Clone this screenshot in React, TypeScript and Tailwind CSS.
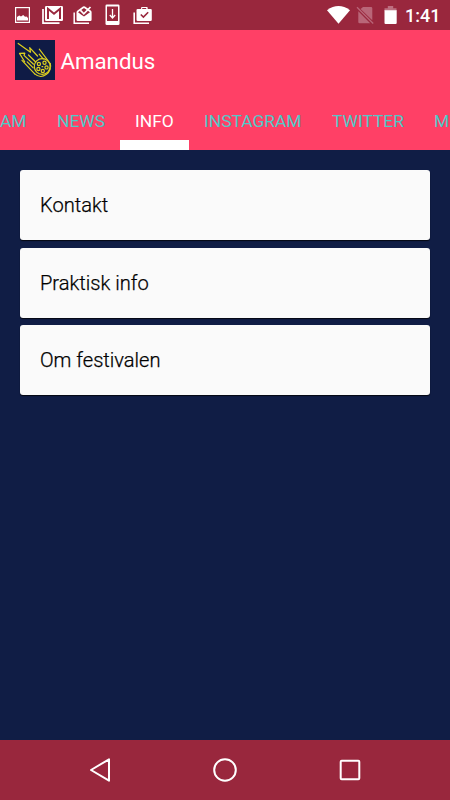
type Tab = {
  label: string;
  className: string;
};

const tabs: Tab[] = [
  { label: "AM", className: "w-[42px] pl-0" },
  { label: "NEWS", className: "w-[78px] pl-[15px]" },
  { label: "INFO", className: "w-[69px] pl-[15px]" },
  { label: "INSTAGRAM", className: "w-[128px] pl-[15px]" },
  { label: "TWITTER", className: "w-[102px] pl-[15px]" },
  { label: "M", className: "w-[42px] pl-[15px]" },
];

const cards = ["Kontakt", "Praktisk info", "Om festivalen"];

function NotificationIcons() {
  return (
    <svg width="160" height="30" viewBox="0 0 160 30" className="shrink-0" aria-hidden="true">
      {/* picture */}
      <rect x="15.6" y="7.6" width="13.8" height="14.8" fill="none" stroke="#fff" strokeWidth="1.2" />
      <path d="M17 20.5v-3.4l2.2-1.5 1.8.9 2.2-1.5 1.8 1.8 1.5-.4 1.5 1.5v2.6z" fill="#fff" />
      {/* mail stack */}
      <path d="M43 9v14.2h16.5" fill="none" stroke="#fff" strokeWidth="1.7" />
      <rect x="45" y="6" width="18" height="15" rx="1.2" fill="#fff" />
      <path d="M48 19V8.8l6 5 6-5V19" fill="none" stroke="#99273d" strokeWidth="2" />
      {/* inbox stack */}
      <path d="M74.2 12.5v10.7H89" fill="none" stroke="#fff" strokeWidth="1.5" />
      <path
        d="M76.5 12.2c0-.8.4-1.2 1-1.6l5.5-4q1-.6 2 0l5.7 4c.6.4.9.8.9 1.6v7.6q0 1.2-1.2 1.2H77.7q-1.2 0-1.2-1.2z"
        fill="#fff"
      />
      <path d="M78 12.3l3 2.2 3 2 6-4.2-6-4.4z" fill="#99273d" />
      <path d="M80.3 10.2l3.5 3.6 6.7-6.8" fill="none" stroke="#fff" strokeWidth="1.7" />
      {/* system update */}
      <rect x="105.5" y="4.5" width="14" height="20.5" rx="1.3" fill="#fff" />
      <rect x="107" y="6.5" width="11" height="14.5" fill="#99273d" />
      <path d="M112.5 9v8.5M109.8 15l2.7 3 2.7-3" fill="none" stroke="#fff" strokeWidth="1.3" />
      {/* checked bags */}
      <path d="M134.2 12.5v10.7H149" fill="none" stroke="#fff" strokeWidth="1.6" />
      <path
        d="M137.7 9h3.4V7.8q0-.9.9-.9h4.8q.9 0 .9.9V9h3q1.1 0 1.1 1.1v9.6q0 1.2-1.2 1.2h-12.9q-1.2 0-1.2-1.2v-9.6q0-1.1 1.2-1.1z"
        fill="#fff"
      />
      <path d="M142.2 8h4v1h-4z" fill="#99273d" />
      <path d="M140.8 14.5l2.6 2.6 4.8-4.8" fill="none" stroke="#99273d" strokeWidth="1.6" />
    </svg>
  );
}

function SystemIcons() {
  return (
    <svg width="76" height="30" viewBox="324 0 76 30" className="shrink-0" aria-hidden="true">
      <path d="M327 10.2q11.5-8.2 23 0L338.5 23.8z" fill="#fff" />
      <path d="M363 7h8q1.3 0 1.3 1.3v11.9L360.6 8.9zM358.3 11.2l11.9 12h-10.6q-1.3 0-1.3-1.3z" fill="#b96678" />
      <path d="M357 7.2l16.2 16.3" stroke="#b96678" strokeWidth="1.3" />
      <path d="M384.5 8.2h3.3V6h5.4v2.2h3.3V11h-12z" fill="#bd6f80" />
      <path d="M384.5 10.2h12.2v12.7q0 1.1-1.1 1.1h-10q-1.1 0-1.1-1.1z" fill="#fff" />
    </svg>
  );
}

function Logo() {
  return (
    <svg width="40" height="40" viewBox="0 0 40 40" className="shrink-0 bg-[#0f1b45]" aria-hidden="true">
      <g fill="none" stroke="#ddd020" strokeWidth="1.2" strokeLinejoin="round" strokeLinecap="round">
        {/* tail */}
        <path d="M3.2 3.4l12.3 8.8-.8-4.6 7.8 8.4" />
        <path d="M24.3 9.2l10.9 14.3" />
        <path d="M24.2 14.2l4 4.6" />
        <path d="M13.5 15l7.2 7" />
        <path d="M18.5 24.2L9 15.4l.8-2.2-5.3.2 5.2 8.4" />
        <path d="M12.2 21.8l6 6" />
        <path d="M7 20.3l12.7 13.6" />
        {/* head */}
        <path d="M35.2 23.5c2.8 8-7.6 17.3-15.5 10.4" />
        <circle cx="27.2" cy="26.5" r="7.9" />
        <circle cx="23.9" cy="24" r="1.6" />
        <circle cx="29.5" cy="22.8" r="1.6" />
        <circle cx="23.4" cy="29" r="1.6" />
        <circle cx="27.8" cy="31" r="1.6" />
        <circle cx="31.5" cy="27.4" r="1.6" />
        <path d="M27 26.7h.8" />
      </g>
    </svg>
  );
}

function NavigationBar() {
  return (
    <nav className="flex h-[60px] shrink-0 items-center justify-between bg-[#99273d] px-[87px]">
      <button aria-label="Back">
        <svg width="26" height="26" viewBox="0 0 26 26" className="block">
          <path d="M22 2.3v21.4L4 13z" fill="none" stroke="#fff" strokeWidth="2" strokeLinejoin="round" />
        </svg>
      </button>
      <button aria-label="Home">
        <svg width="26" height="26" viewBox="0 0 26 26" className="block">
          <circle cx="13" cy="13" r="10.8" fill="none" stroke="#fff" strokeWidth="2" />
        </svg>
      </button>
      <button aria-label="Recent apps">
        <svg width="26" height="26" viewBox="0 0 26 26" className="block">
          <rect x="3.7" y="3.7" width="18.6" height="18.6" rx="1" fill="none" stroke="#fff" strokeWidth="2" />
        </svg>
      </button>
    </nav>
  );
}

export default function App() {
  return (
    <div className="flex h-[800px] w-[450px] flex-col overflow-hidden bg-[#101d45] font-['Roboto',sans-serif]">
      <div className="flex h-[30px] shrink-0 items-center bg-[#99273d] text-white">
        <NotificationIcons />
        <div className="ml-auto flex items-center pr-[10px]">
          <SystemIcons />
          <span className="ml-[5px] w-[35px] pt-px text-[18px] leading-[29px] font-medium whitespace-nowrap">1:41</span>
        </div>
      </div>

      <header className="flex h-[120px] shrink-0 flex-col bg-[#ff4066]">
        <div className="flex h-[60px] items-center pl-[15.4px] text-white">
          <Logo />
          <h1 className="ml-[5px] pt-[2px] text-[22.3px] leading-[30px]">Amandus</h1>
        </div>
        <div className="flex h-[60px] overflow-hidden">
          {tabs.map(({ label, className }) => (
            <button
              key={label}
              className={`flex shrink-0 items-start border-b-[10px] pt-[19px] text-left text-[17.4px] leading-[25px] ${className} ${
                label === "INFO" ? "border-white text-white" : "border-transparent text-[#51c9c8]"
              }`}
            >
              {label}
            </button>
          ))}
        </div>
      </header>

      <main className="flex flex-1 flex-col gap-[7.5px] px-5 pt-5">
        {cards.map((title) => (
          <div
            key={title}
            className="flex h-[70px] items-center rounded-[3px] bg-[#fafafa] px-5 pt-px text-[20.1px] font-light text-black shadow-[0_1px_1px_#000000c0] [-webkit-text-stroke:0.25px_black]"
          >
            {title}
          </div>
        ))}
      </main>

      <NavigationBar />
    </div>
  );
}
